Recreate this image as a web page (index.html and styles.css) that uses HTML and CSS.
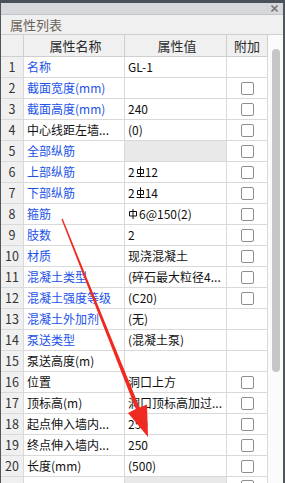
FILE: index.html
```html
<!DOCTYPE html>
<html lang="zh">
<head>
<meta charset="utf-8">
<title>属性列表</title>
<link rel="stylesheet" href="styles.css">
</head>
<body>
<div class="panel">
  <div class="topbar">
    <svg class="close" width="7" height="7" viewBox="0 0 7 7"><path d="M0.5 0.5L6.5 6.5M6.5 0.5L0.5 6.5" stroke="#7a7a7a" stroke-width="1.6"/></svg>
  </div>
  <div class="title">属性列表</div>
  <div class="body">
    <div class="grid">
      <div class="row head">
        <div class="c num"></div>
        <div class="c name">属性名称</div>
        <div class="c val">属性值</div>
        <div class="c add">附加</div>
      </div>
      <div class="row"><div class="c num">1</div><div class="c name link">名称</div><div class="c val">GL-1</div><div class="c add"></div></div>
      <div class="row"><div class="c num">2</div><div class="c name link">截面宽度(mm)</div><div class="c val"></div><div class="c add"><span class="cb"></span></div></div>
      <div class="row"><div class="c num">3</div><div class="c name link">截面高度(mm)</div><div class="c val">240</div><div class="c add"><span class="cb"></span></div></div>
      <div class="row"><div class="c num">4</div><div class="c name">中心线距左墙...</div><div class="c val">(0)</div><div class="c add"><span class="cb"></span></div></div>
      <div class="row"><div class="c num">5</div><div class="c name link">全部纵筋</div><div class="c val group"></div><div class="c add"><span class="cb"></span></div></div>
      <div class="row"><div class="c num">6</div><div class="c name link">上部纵筋</div><div class="c val">2<svg class="bar3" width="9" height="12" viewBox="0 0 9 12"><path d="M4.5 0.5V10.5M1.5 3.5H7.5V7.5H1.5Z M0.5 10.5H8.5" fill="none" stroke="#111" stroke-width="1"/></svg>12</div><div class="c add"><span class="cb"></span></div></div>
      <div class="row"><div class="c num">7</div><div class="c name link">下部纵筋</div><div class="c val">2<svg class="bar3" width="9" height="12" viewBox="0 0 9 12"><path d="M4.5 0.5V10.5M1.5 3.5H7.5V7.5H1.5Z M0.5 10.5H8.5" fill="none" stroke="#111" stroke-width="1"/></svg>14</div><div class="c add"><span class="cb"></span></div></div>
      <div class="row"><div class="c num">8</div><div class="c name link">箍筋</div><div class="c val"><svg class="bar1" width="10" height="12" viewBox="0 0 10 12"><path d="M5 1V11M1.5 3.5H8.5V8H1.5Z" fill="none" stroke="#111" stroke-width="1"/></svg>6@150(2)</div><div class="c add"><span class="cb"></span></div></div>
      <div class="row"><div class="c num">9</div><div class="c name link">肢数</div><div class="c val">2</div><div class="c add"><span class="cb"></span></div></div>
      <div class="row"><div class="c num">10</div><div class="c name link">材质</div><div class="c val">现浇混凝土</div><div class="c add"><span class="cb"></span></div></div>
      <div class="row"><div class="c num">11</div><div class="c name link">混凝土类型</div><div class="c val">(碎石最大粒径4...</div><div class="c add"><span class="cb"></span></div></div>
      <div class="row"><div class="c num">12</div><div class="c name link">混凝土强度等级</div><div class="c val">(C20)</div><div class="c add"><span class="cb"></span></div></div>
      <div class="row"><div class="c num">13</div><div class="c name link">混凝土外加剂</div><div class="c val">(无)</div><div class="c add"></div></div>
      <div class="row"><div class="c num">14</div><div class="c name link">泵送类型</div><div class="c val">(混凝土泵)</div><div class="c add"></div></div>
      <div class="row"><div class="c num">15</div><div class="c name">泵送高度(m)</div><div class="c val"></div><div class="c add"></div></div>
      <div class="row"><div class="c num">16</div><div class="c name">位置</div><div class="c val">洞口上方</div><div class="c add"><span class="cb"></span></div></div>
      <div class="row"><div class="c num">17</div><div class="c name">顶标高(m)</div><div class="c val">洞口顶标高加过...</div><div class="c add"><span class="cb"></span></div></div>
      <div class="row"><div class="c num">18</div><div class="c name">起点伸入墙内...</div><div class="c val">250</div><div class="c add"><span class="cb"></span></div></div>
      <div class="row"><div class="c num">19</div><div class="c name">终点伸入墙内...</div><div class="c val">250</div><div class="c add"><span class="cb"></span></div></div>
      <div class="row"><div class="c num">20</div><div class="c name">长度(mm)</div><div class="c val">(500)</div><div class="c add"><span class="cb"></span></div></div>
      <div class="row"><div class="c num"></div><div class="c name"></div><div class="c val group"></div><div class="c add top"><span class="cb"></span></div></div>
    </div>
    <div class="scroll"><div class="thumb"></div></div>
  </div>
  <svg class="arrow" width="285" height="483" viewBox="0 0 285 483">
    <polygon fill="#f02a20" points="61.4,219.3 62.7,218.7 139.6,407.6 147,404.5 148,437 128,413 135.8,409.1"/>
  </svg>
</div>
</body>
</html>
```
FILE: styles.css
```css
* { box-sizing: border-box; }
html, body { margin: 0; padding: 0; }
body {
  width: 285px;
  height: 483px;
  overflow: hidden;
  background: #f0f0f0;
  font-family: "Noto Sans CJK SC", "Liberation Sans", sans-serif;
}
.panel {
  position: relative;
  width: 285px;
  height: 483px;
  display: flex;
  flex-direction: column;
  border-left: 1px solid #50565e;
  border-right: 2px solid #50565e;
  border-top: 3px solid #4b5159;
  background: #f0f0f0;
  overflow: hidden;
}
.topbar {
  height: 12px;
  flex: none;
  background: #d6d8db;
  border-bottom: 1px solid #c2c4c7;
  display: flex;
  justify-content: flex-end;
  align-items: center;
  padding-right: 5px;
}
.close { display: block; }
.title {
  height: 20px;
  flex: none;
  background: #f0f0f0;
  border-bottom: 1px solid #d0d0d0;
  padding-left: 9px;
  font-size: 13px;
  line-height: 20px;
  color: #6b6459;
}
.body {
  flex: 1;
  display: flex;
  min-height: 0;
  overflow: hidden;
}
.grid {
  width: 267px;
  flex: none;
  display: flex;
  flex-direction: column;
}
.row {
  display: grid;
  grid-template-columns: 23px 101px 102px 41px;
  height: 21px;
  flex: none;
  border-bottom: 1px solid #d9d9d9;
  font-size: 12px;
  line-height: 20px;
  color: #111;
  background: #fff;
}
.row.head {
  height: 22px;
  background: #f0f0f0;
  border-bottom: 1px solid #cfcfcf;
  font-size: 13px;
  line-height: 21px;
  color: #2b2b2b;
}
.c {
  border-right: 1px solid #d9d9d9;
  white-space: nowrap;
  overflow: hidden;
  display: flex;
  align-items: center;
}
.head .c { border-right-color: #cfcfcf; justify-content: center; }
.num {
  background: #f0f0f0;
  justify-content: center;
  color: #333;
  font-size: 12.5px;
}
.name { padding-left: 3px; }
.val { padding-left: 3px; }
.val.group { background: #e9e9e9; }
.link { color: #2152e8; }
.add { justify-content: center; }
.add.top { align-items: flex-start; padding-top: 3px; }
.cb {
  width: 13px;
  height: 13px;
  flex: none;
  border: 1px solid #8e8e8e;
  border-radius: 2px;
  background: #fff;
}
.bar3 { margin: 0 0 1px 1px; }
.bar1 { margin: 0 1px 1px 0; }
.scroll {
  flex: 1;
  background: #fbfbfb;
  position: relative;
  padding: 14px 2px 0 4px;
}
.thumb {
  width: 8px;
  height: 323px;
  border-radius: 4px;
  background: #c6c6c6;
}
.arrow {
  position: absolute;
  left: -1px;
  top: -3px;
  pointer-events: none;
}
```
